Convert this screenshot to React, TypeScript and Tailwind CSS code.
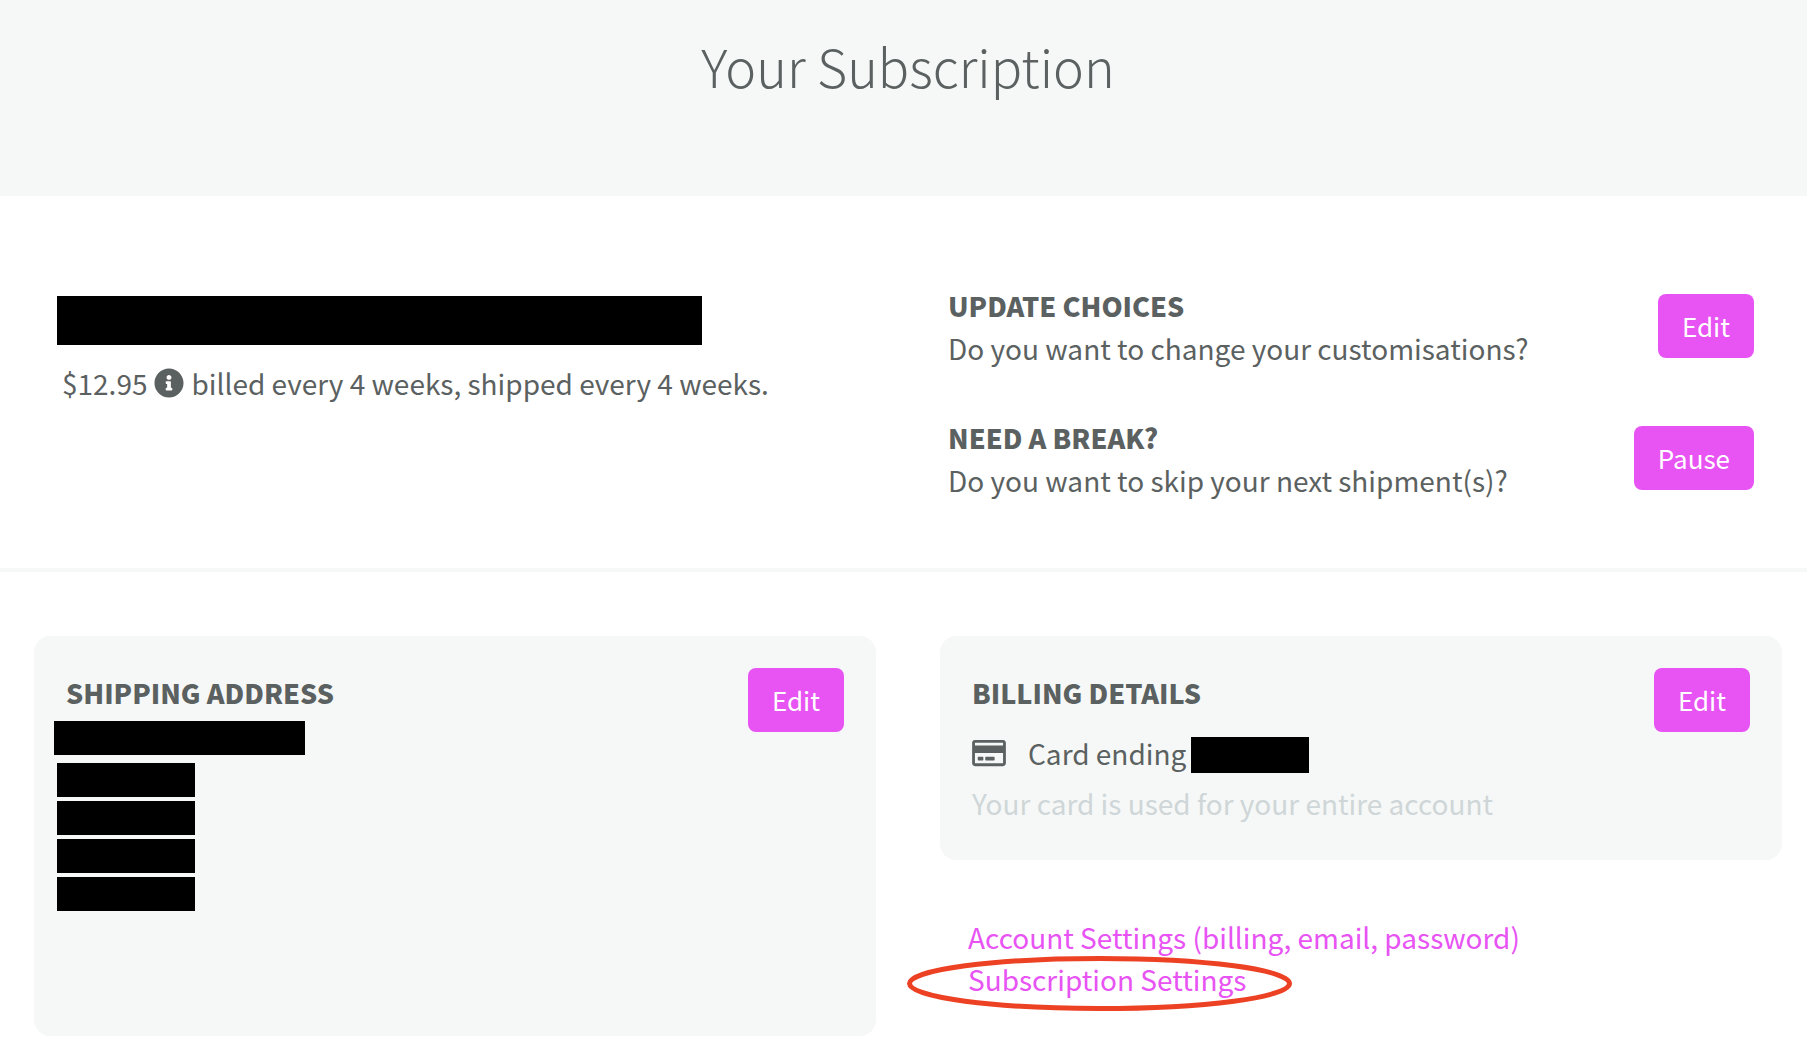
import type { ReactNode } from "react";
import { FaInfoCircle, FaRegCreditCard } from "react-icons/fa";

function ActionButton({ children }: { children: ReactNode }) {
  return (
    <button
      type="button"
      className="h-16 shrink-0 rounded-lg bg-[#e853f3] px-6 pb-px text-[26px] leading-8 font-normal text-white"
    >
      {children}
    </button>
  );
}

function SectionTitle({ children }: { children: ReactNode }) {
  return <h2 className="text-[27px] leading-[42px] font-black uppercase">{children}</h2>;
}

function Prompt({ title, text, action }: { title: string; text: string; action: string }) {
  return (
    <div className="flex items-start justify-between gap-4">
      <div>
        <SectionTitle>{title}</SectionTitle>
        <p>{text}</p>
      </div>
      <div className="mt-[9px] flex">
        <ActionButton>{action}</ActionButton>
      </div>
    </div>
  );
}

export default function App() {
  return (
    <main className="min-h-screen bg-white font-['Noto_Sans_CJK_SC','Noto_Sans',sans-serif] text-[28px] leading-[42px] font-normal text-[#5b6161]">
      <header className="bg-[#f6f8f7] pt-[30px] pr-[25px] pb-[94px] pl-[34px] text-center">
        <h1 className="text-[52px] leading-[72px] font-light">Your Subscription</h1>
      </header>

      <section className="grid grid-cols-2 gap-16 border-b-4 border-[#f6f8f7] pt-[89px] pr-[25px] pb-[67px] pl-[34px]">
        <div className="pt-[11px] pl-[23px]">
          <div className="h-[49px] w-[645px] max-w-full bg-black" />
          <p className="mt-[17px] flex items-center gap-[7px] pl-[5px]">
            <span>$12.95</span>
            <FaInfoCircle className="size-[30px]" />
            <span>billed every 4 weeks, shipped every 4 weeks.</span>
          </p>
        </div>
        <div className="flex flex-col gap-12 pr-7 pl-2">
          <Prompt title="Update choices" text="Do you want to change your customisations?" action="Edit" />
          <Prompt title="Need a break?" text="Do you want to skip your next shipment(s)?" action="Pause" />
        </div>
      </section>

      <section className="grid grid-cols-2 gap-16 pt-16 pr-[25px] pb-[26px] pl-[34px]">
        <div className="flex min-h-[400px] items-start justify-between rounded-2xl bg-[#f6f8f7] p-8">
          <div className="-ml-3 flex flex-col gap-1 pt-1">
            <div className="pl-3">
              <SectionTitle>Shipping address</SectionTitle>
            </div>
            <div className="mt-[3px] mb-1 h-[34px] w-[251px] bg-black" />
            <div className="ml-[3px] flex flex-col gap-1">
              <div className="h-[34px] w-[138px] bg-black" />
              <div className="h-[34px] w-[138px] bg-black" />
              <div className="h-[34px] w-[138px] bg-black" />
              <div className="h-[34px] w-[138px] bg-black" />
            </div>
          </div>
          <ActionButton>Edit</ActionButton>
        </div>

        <div>
          <div className="flex min-h-[224px] items-start justify-between rounded-2xl bg-[#f6f8f7] p-8">
            <div className="pt-1">
              <SectionTitle>Billing details</SectionTitle>
              <div className="mt-[18px] flex items-center">
                <FaRegCreditCard className="mr-[22px] h-[30px] w-[34px]" />
                <span>Card ending</span>
                <span className="mt-1 ml-[5px] h-9 w-[118px] bg-black" />
              </div>
              <p className="mt-2 text-[#cfd6d8]">Your card is used for your entire account</p>
            </div>
            <ActionButton>Edit</ActionButton>
          </div>

          <nav className="flex flex-col items-start pt-14 pl-7 text-[#e853f3]">
            <a href="#account">Account Settings (billing, email, password)</a>
            <a href="#subscription" className="relative">
              Subscription Settings
              <svg
                className="pointer-events-none absolute -top-[2px] -left-[61px] h-[55px] w-[385px] max-w-none"
                viewBox="0 0 385 55"
                fill="none"
                aria-hidden="true"
              >
                <ellipse cx="192.5" cy="27.5" rx="190" ry="25" stroke="#ed4124" strokeWidth="5" />
              </svg>
            </a>
          </nav>
        </div>
      </section>
    </main>
  );
}
